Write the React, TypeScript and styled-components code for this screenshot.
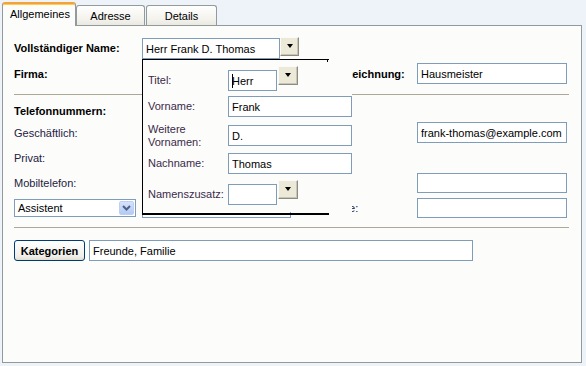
import React from 'react';
import styled, { createGlobalStyle, css } from 'styled-components';

const GlobalStyle = createGlobalStyle`
  html, body {
    margin: 0;
    padding: 0;
    background: #eef2f9;
  }
  body {
    font-family: "Liberation Sans", Arial, sans-serif;
    font-size: 11px;
    color: #000;
  }
  * {
    box-sizing: border-box;
  }
`;

const Page = styled.div`
  width: 586px;
  height: 366px;
  overflow: hidden;
`;

const TabBar = styled.div`
  display: flex;
  align-items: flex-end;
  height: 25px;
  padding-left: 2px;
  position: relative;
  z-index: 2;
`;

const Tab = styled.div<{ $active?: boolean; $w: number; $ml?: number }>`
  width: ${(p) => p.$w}px;
  margin-left: ${(p) => p.$ml || 0}px;
  height: 20px;
  border: 1px solid #919b9c;
  border-bottom: none;
  border-radius: 3px 3px 0 0;
  background: linear-gradient(#ffffff, #f3f2ec 70%, #e9e8e1);
  display: flex;
  align-items: center;
  justify-content: center;
  padding-top: 1px;
  color: #000;
  ${(p) =>
    p.$active &&
    css`
      height: 24px;
      margin-bottom: -1px;
      background: #fcfcfb;
      border-top: 2px solid #f2a43a;
      box-shadow: inset 0 1px 0 #ffcb55;
      justify-content: flex-start;
      padding: 0 0 3px 7px;
    `}
`;

const Panel = styled.div`
  margin-left: 2px;
  width: 580px;
  height: 338px;
  border: 1px solid #919b9c;
  background: #fcfcfb;
  padding: 11px 12px 0 11px;
  position: relative;
`;

const Row = styled.div<{ $mt?: number; $h?: number }>`
  display: grid;
  grid-template-columns: 128px 157px 118px 150px;
  align-items: center;
  height: ${(p) => p.$h || 21}px;
  margin-top: ${(p) => p.$mt || 0}px;
`;

const Label = styled.div`
  color: #22223f;
  white-space: nowrap;
`;

const BoldLabel = styled.div`
  font-weight: bold;
  color: #000;
  white-space: nowrap;
`;

const Heading = styled.div`
  font-weight: bold;
  height: 13px;
  line-height: 13px;
  margin-top: 10px;
`;

const Separator = styled.div<{ $mt: number }>`
  height: 1px;
  background: #aca899;
  margin-top: ${(p) => p.$mt}px;
`;

const FieldCell = styled.div`
  position: relative;
  display: flex;
  align-items: flex-start;
  height: 100%;
`;

const TextBox = styled.div<{ $w: number; $h?: number; $mt?: number }>`
  width: ${(p) => p.$w}px;
  height: ${(p) => p.$h || 21}px;
  margin-top: ${(p) => p.$mt || 0}px;
  border: 1px solid #7f9db9;
  background: #fff;
  padding: 0 3px;
  display: flex;
  align-items: center;
  white-space: nowrap;
  overflow: hidden;
  color: #000;
`;

const Caret = styled.span`
  display: inline-block;
  width: 1px;
  height: 14px;
  background: #000;
  margin-right: -1px;
`;

const DropButton = styled.div<{ $w?: number; $mt?: number; $ml?: number }>`
  width: ${(p) => p.$w || 19}px;
  height: 19px;
  margin-top: ${(p) => p.$mt || 0}px;
  margin-left: ${(p) => p.$ml || 0}px;
  flex-shrink: 0;
  border: 1px solid;
  border-color: #fbfaf6 #8e8c80 #8e8c80 #fbfaf6;
  box-shadow: inset -1px -1px 0 #c9c5b6;
  background: #ece9d8;
  display: flex;
  align-items: center;
  justify-content: center;

  &::after {
    content: '';
    width: 0;
    height: 0;
    border-left: 3.5px solid transparent;
    border-right: 3.5px solid transparent;
    border-top: 4px solid #000;
    margin-top: -1px;
  }
`;

const Popup = styled.div`
  position: absolute;
  left: 0;
  top: 22px;
  width: 210px;
  height: 153px;
  background: #fcfcfb;
  z-index: 5;
  padding: 11px 0 0 6px;

  &::before {
    content: '';
    position: absolute;
    left: 0;
    top: 0;
    width: 186px;
    height: 153px;
    border-top: 1px solid #000;
    border-left: 1px solid #000;
    border-bottom: 2px solid #000;
    pointer-events: none;
  }
  &::after {
    content: '';
    position: absolute;
    left: 185px;
    top: 0;
    width: 1px;
    height: 3px;
    background: #000;
  }
`;

const PopRow = styled.div<{ $mt?: number }>`
  display: flex;
  align-items: center;
  height: 21px;
  margin-top: ${(p) => p.$mt || 0}px;
`;

const PopLabel = styled.div`
  width: 80px;
  color: #3a2a4a;
  line-height: 13px;
`;

const Select = styled.div`
  width: 122px;
  height: 18px;
  border: 1px solid #7f9db9;
  background: #fff;
  display: flex;
  align-items: center;
  justify-content: space-between;
  padding: 0 1px 0 3px;
`;

const SelectArrow = styled.div`
  width: 15px;
  height: 14px;
  border-radius: 2px;
  background: linear-gradient(#d6e2fc, #b4c9f5);
  border: 1px solid #bcd0f6;
  display: flex;
  align-items: center;
  justify-content: center;
`;

const CatRow = styled.div`
  display: flex;
  align-items: center;
  gap: 4px;
  margin-top: 12px;
`;

const PushButton = styled.div`
  width: 71px;
  height: 21px;
  border: 1px solid #003c74;
  border-radius: 3px;
  background: linear-gradient(#ffffff, #f0efe9 80%, #e1ded2);
  font-weight: bold;
  display: flex;
  align-items: center;
  justify-content: center;
`;

const Chevron = () => (
  <svg width="9" height="6" viewBox="0 0 9 6">
    <path d="M1 1 L4.5 4.5 L8 1" fill="none" stroke="#4d6185" strokeWidth="2" />
  </svg>
);

const NamePopup = () => (
  <Popup>
    <PopRow>
      <PopLabel>Titel:</PopLabel>
      <TextBox $w={49}>
        <Caret />
        Herr
      </TextBox>
      <DropButton $w={20} $mt={-10} $ml={1} />
    </PopRow>
    <PopRow $mt={5}>
      <PopLabel>Vorname:</PopLabel>
      <TextBox $w={124}>Frank</TextBox>
    </PopRow>
    <PopRow $mt={8}>
      <PopLabel>
        Weitere
        <br />
        Vornamen:
      </PopLabel>
      <TextBox $w={124}>D.</TextBox>
    </PopRow>
    <PopRow $mt={7}>
      <PopLabel>Nachname:</PopLabel>
      <TextBox $w={124}>Thomas</TextBox>
    </PopRow>
    <PopRow $mt={10}>
      <PopLabel>Namenszusatz:</PopLabel>
      <TextBox $w={49} />
      <DropButton $w={20} $mt={-10} $ml={1} />
    </PopRow>
  </Popup>
);

export default function App() {
  return (
    <Page>
      <GlobalStyle />
      <TabBar>
        <Tab $active $w={74}>
          Allgemeines
        </Tab>
        <Tab $w={69}>Adresse</Tab>
        <Tab $w={71} $ml={1}>
          Details
        </Tab>
      </TabBar>
      <Panel>
        <Row $h={22}>
          <BoldLabel>Vollständiger Name:</BoldLabel>
          <FieldCell>
            <TextBox $w={150} $mt={1}>
              Herr Frank D. Thomas
            </TextBox>
            <DropButton />
            <NamePopup />
          </FieldCell>
        </Row>
        <Row $mt={4}>
          <BoldLabel>Firma:</BoldLabel>
          <TextBox $w={150} />
          <BoldLabel>Berufsbezeichnung:</BoldLabel>
          <TextBox $w={150}>Hausmeister</TextBox>
        </Row>
        <Separator $mt={10} />
        <Heading>Telefonnummern:</Heading>
        <Row $mt={4}>
          <Label>Geschäftlich:</Label>
          <TextBox $w={150} />
          <Label>E-Mail:</Label>
          <TextBox $w={150}>frank-thomas@example.com</TextBox>
        </Row>
        <Row $mt={4}>
          <Label>Privat:</Label>
          <TextBox $w={150} />
          <div />
          <div />
        </Row>
        <Row $mt={4}>
          <Label>Mobiltelefon:</Label>
          <TextBox $w={150} />
          <Label>Webseite:</Label>
          <TextBox $w={150} $h={20} />
        </Row>
        <Row $mt={4}>
          <Select>
            <span>Assistent</span>
            <SelectArrow>
              <Chevron />
            </SelectArrow>
          </Select>
          <TextBox $w={149} $h={20} />
          <Label>IM-Adresse:</Label>
          <TextBox $w={150} $h={20} />
        </Row>
        <Separator $mt={9} />
        <CatRow>
          <PushButton>Kategorien</PushButton>
          <TextBox $w={384}>Freunde, Familie</TextBox>
        </CatRow>
      </Panel>
    </Page>
  );
}
